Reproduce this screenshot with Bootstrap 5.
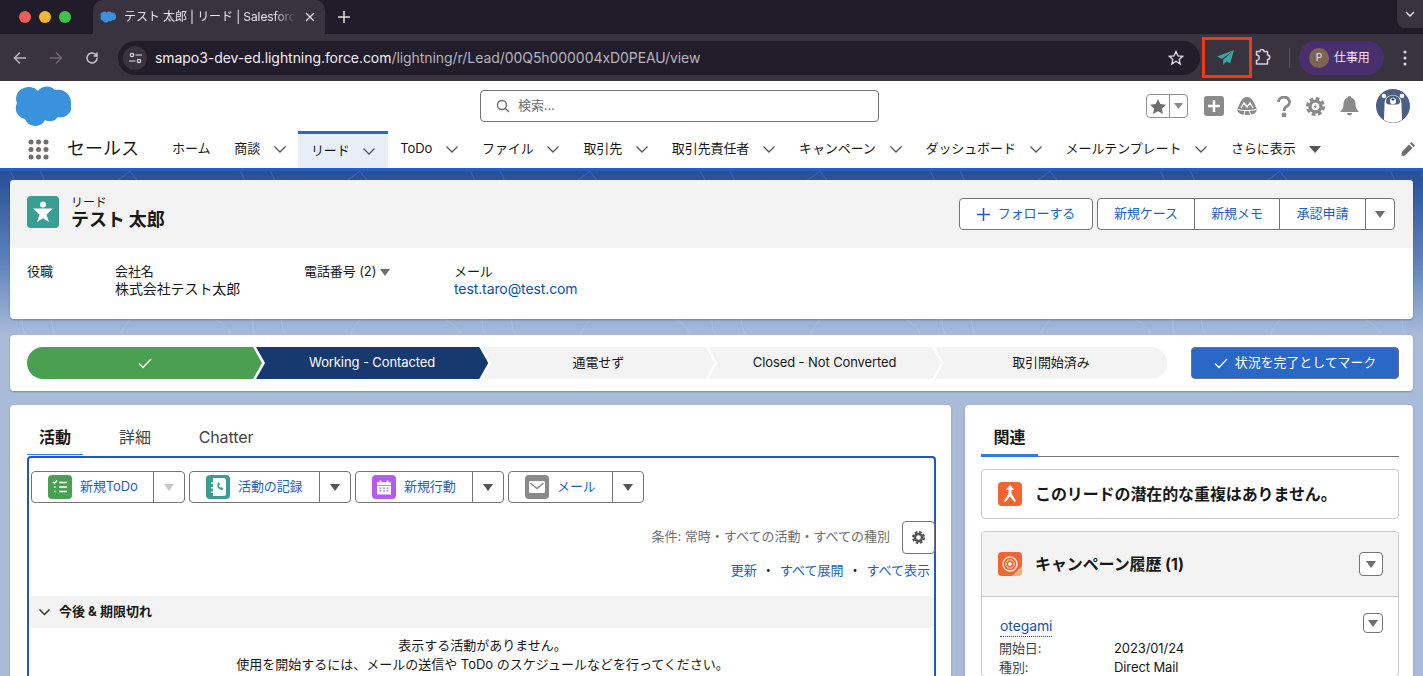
<!DOCTYPE html>
<html lang="ja">
<head>
<meta charset="utf-8">
<title>テスト 太郎 | リード | Salesforce</title>
<link href="https://cdn.jsdelivr.net/npm/bootstrap@5.3.0/dist/css/bootstrap.min.css" rel="stylesheet">
<style>
html,body{height:676px;overflow:hidden}
body{font-family:Inter,"Noto Sans CJK JP",sans-serif;font-size:13px;color:#181818;background:#a9bbd9;letter-spacing:-.1px}
a{text-decoration:none;color:#1b5fc1}
.tabstrip{height:34px;background:#201c2a;color:#e8e4ee}
.dot{width:12px;height:12px;border-radius:50%}
.lights{padding-left:19px;gap:8px;width:93px}
.tabitem{width:232px;height:34px;background:#39323f;border-radius:10px 10px 0 0;padding:0 10px 0 7px;font-size:12px;white-space:nowrap;overflow:hidden}
.tabitem .ttl{width:172px;overflow:hidden;margin-left:8px;-webkit-mask-image:linear-gradient(90deg,#000 150px,transparent 172px);mask-image:linear-gradient(90deg,#000 150px,transparent 172px)}
.strip-more{width:26px;height:28px;background:#39323f;border-radius:0 0 0 8px;margin-left:auto}
.toolbar{height:47px;background:#39323f;color:#ddd8e2;padding-left:2px}
.navbtn{width:36px}
.addr{width:1082px;height:34px;border-radius:17px;background:#221d2b;margin-left:8px;padding:0 16px 0 5px;color:#e8e4ee;font-size:14px;letter-spacing:-.06px}
.addr .host{color:#f2eff5}
.addr .rest{color:#b8b3be}
.siteic{width:24px;height:24px;border-radius:50%;background:#39323f;margin-right:8px}
.redbox{width:50px;height:41px;border:3px solid #f03a17;margin-left:2px;padding-right:4px}
.plug{margin-left:3px}
.tdiv{width:1px;height:20px;background:#5a5360;margin:0 9px 0 17px}
.profile{width:85px;height:34px;border-radius:17px;background:#4a2f6f;color:#efe9f7;font-size:12px;padding-left:10px;gap:5px}
.pav{width:20px;height:20px;border-radius:50%;background:#7d6553;color:#f0e8e0;font-size:10px}
.sfhead{height:50px;background:#fff;position:relative}
.logo{margin-left:14px;margin-top:5px}
.search{width:399px;height:32px;border:1px solid #747474;border-radius:4px;position:absolute;left:480px;top:9px;color:#706e6b;padding-left:15px;gap:8px;font-size:13px}
.hicons{position:absolute;right:13px;top:8px;gap:0}
.favgrp{width:42px;height:24px;border:1px solid #8f8f8f;border-radius:4px;margin-right:16px}
.favgrp span{height:100%}
.favl{width:23px;border-right:1px solid #8f8f8f}
.mr13{margin-right:13px}.mr20{margin-right:20px}.mr17{margin-right:17px}.mr15{margin-right:15px}
.sfnav{height:37px;background:#fff;align-items:flex-start}
.waffle{margin-left:28px;width:21px;margin-top:8px}
.appname{font-size:18px;margin-left:18px;width:93px;letter-spacing:0;line-height:36px}
.navi{height:36px;padding:0 12px;color:#181818;white-space:nowrap;gap:13.75px;font-size:13px}
.navi.on{background:#e8eef7;border-top:3px solid #2a68c8;padding:0 13px;height:37px}
.penc{margin-top:11px}
.bluebar{height:3px;background:#1f5fc6}
.stage{height:505px;overflow:hidden;padding:9px 10px 0;background-image:url("data:image/svg+xml,%3Csvg xmlns='http://www.w3.org/2000/svg' width='230' height='165' fill='none' stroke='%23ffffff' stroke-opacity='.12'%3E%3Cpath d='M10 0c20 30-8 60 12 90s-10 50 4 75M40 0c18 30-6 55 10 85s-8 55 6 80M130 0c-30 25-60 20-50 60s60 30 70 0-10-45-20-60zM190 30c-25 10-30 45-5 60s50-15 40-40-20-28-35-20zM120 165c10-30 50-40 80-25s30 20 30 25'/%3E%3C/svg%3E"),linear-gradient(#264f97 0,#5f82bc 90px,#a9bbd9 165px,#a9bbd9 100%);background-repeat:repeat-x,no-repeat;background-size:230px 165px,100% 100%}
.panel{background:#fff;border-radius:4px;box-shadow:0 1px 2px rgba(0,0,0,.25);border:0}
.hl{height:139px}
.hlhead{height:68px;background:#f3f3f3;border-radius:4px 4px 0 0;padding:16px 18px 0 17px}
.hlicon{width:32px;height:32px;border-radius:4px;background:#3a9d92;margin-right:12px}
.hl-type{font-size:12px;line-height:13px}
.hl-name{font-size:18px;font-weight:700;line-height:21px}
.sbtn{height:32px;background:#fff;border:1px solid #747474;border-radius:4px;color:#1b5fc1;font-size:13px}
.btnwrap{margin-top:2px}
.flw{width:134px;gap:8px}
.grp{margin-left:4px;background:#fff}
.grp span{height:100%;border-right:1px solid #747474}
.grp span:last-child{border-right:0}
.w97{width:97px}.w85{width:85px}.w86{width:86px}.w28{width:28px}
.flds{padding:14px 17px 0;line-height:18px}
.f1{width:88px}.f2{width:189px}.f3{width:150px}
.fv{font-size:14px;line-height:18px}
.fv a{color:#0b4fae}
.pathc{height:56px;margin-top:16px;padding:12px 14px 0 17px}
.seg{flex:1 1 0;height:32px;margin-left:-6px;background:#f3f3f3;clip-path:polygon(0 0,calc(100% - 9px) 0,100% 50%,calc(100% - 9px) 100%,0 100%,9px 50%);font-size:13px;color:#181818}
.seg.s1{flex:0 0 235px;margin-left:0;background:#4a9f50;border-radius:16px 0 0 16px;clip-path:polygon(0 0,calc(100% - 9px) 0,100% 50%,calc(100% - 9px) 100%,0 100%)}
.seg.s2{background:#16396f;color:#fff}
.seg.s5{border-radius:0 16px 16px 0;clip-path:polygon(0 0,100% 0,100% 100%,0 100%,9px 50%)}
.markbtn{width:208px;height:32px;margin-left:24px;background:#2a68c8;border:1px solid #747474;border-radius:4px;color:#fff;gap:7px}
.cols{margin-top:14px;gap:14px}
.leftc{width:941px;height:271px;padding:0 15px 0 17px;border-radius:4px 4px 0 0}
.rightc{width:448px;height:271px;padding:0 14px 0 16px;border-radius:4px 4px 0 0}
.tabrow{height:51px;font-size:16px;color:#444}
.tabrow .t{width:56px;text-align:center;line-height:22px;padding-top:21px;height:50px;box-sizing:border-box}
.tabrow .t.on{color:#181818;font-weight:700;border-bottom:1px solid #2a7ee6}
.tabsp{margin-left:24px}
.tabsp2{margin-left:35px}
.actbox{border:2px solid #1f57c3;border-bottom:0;border-radius:4px 4px 0 0;height:220px;padding:13px 0 0 2px;position:relative}
.splt{height:32px;background:#fff;border:1px solid #747474;border-radius:4px;color:#1b5fc1;margin-right:4px}
.splt .lb{height:100%;padding-left:16px;gap:8px;border-right:1px solid #747474}
.splt .ar{width:30px}
.w122{width:122px}.w130{width:130px}.w117{width:117px}.w104{width:104px}
.actic{width:24px;height:24px;border-radius:4px;position:relative;overflow:hidden}
.ic-g{background:#4a9f50}.ic-t{background:#3a9d92}.ic-p{background:#b45cf0}.ic-k{background:#8a8a8a}.ic-o{background:#f26430}
.filt{color:#706e6b;justify-content:flex-end;height:32px;margin-top:18px;gap:12px;letter-spacing:0}
.gearb{width:33px;height:33px;border:1px solid #747474;border-radius:4px;margin-right:-1px;background:#fff}
.lnks{justify-content:flex-end;height:22px;margin-top:7px;gap:5px;padding-right:4px;letter-spacing:0}
.secb{height:32px;background:#f3f3f3;margin:14px 0 0 -2px;padding-left:10px;font-weight:700;gap:9px;border-radius:3px;letter-spacing:0}
.empty{text-align:center;line-height:19px;margin-top:8px;letter-spacing:0}
.reltab{height:52px;border-bottom:1px solid #747474;font-size:16px;font-weight:700}
.reltab .t{width:57px;height:52px;text-align:center;padding-top:21px;line-height:22px;border-bottom:3px solid #2a7ee6;box-sizing:border-box}
.rcard{border:1px solid #c9c9c9;border-radius:4px;background:#fff}
.dupc{height:50px;margin-top:12px;padding-left:16px;font-weight:700;font-size:16px;gap:13px}
.campc{margin-top:12px;height:146px}
.camph{height:65px;background:#f3f3f3;border-bottom:1px solid #c9c9c9;border-radius:4px 4px 0 0;padding:0 15px 0 16px;font-weight:700;font-size:16px;gap:13px}
.ddb{width:24px;height:24px;border:1px solid #747474;border-radius:4px;background:#fff;margin-left:auto}
.ddb2{width:20px;height:20px;position:absolute;right:15px;top:16px}
.cbody{position:relative;padding:19px 0 0 17px}
.oteg{font-size:14px;color:#1b4fa8;border-bottom:1px dotted #1b4fa8;line-height:20px;display:inline-block;margin-left:1px}
.dl{line-height:19px}
.dl1{margin-top:2px}
.dl .k{width:115px;color:#444}
</style>
</head>
<body>
<div class="tabstrip d-flex align-items-center">
  <div class="lights d-flex"><span class="dot" style="background:#ed5f57"></span><span class="dot" style="background:#f4b72f"></span><span class="dot" style="background:#3fc24a"></span></div>
  <div class="tabitem d-flex align-items-center">
    <svg width="16" height="12" viewBox="0 0 57 40"><path fill="#3a92dc" d="M24 5a11 11 0 0 1 17-1 13 13 0 0 1 16 13 11 11 0 0 1-13 14 10 10 0 0 1-13 3 11 11 0 0 1-20-1A11 11 0 0 1 3 17 11 11 0 0 1 10 2a12 12 0 0 1 14 3z"/></svg>
    <div class="ttl">テスト 太郎 | リード | Salesforce</div>
    <svg class="ms-auto" width="10" height="10" viewBox="0 0 10 10" stroke="#ddd" stroke-width="1.4"><path d="M1 1l8 8M9 1l-8 8"/></svg>
  </div>
  <svg style="margin-left:13px" width="12" height="12" viewBox="0 0 12 12" stroke="#ddd" stroke-width="1.5"><path d="M6 0v12M0 6h12"/></svg>
  <div class="strip-more d-flex align-items-center justify-content-center align-self-start"><svg width="10" height="6" viewBox="0 0 10 6" fill="none" stroke="#ddd" stroke-width="1.5"><path d="M1 1l4 4 4-4"/></svg></div>
</div>
<div class="toolbar d-flex align-items-center">
  <div class="navbtn d-flex justify-content-center"><svg width="14" height="14" viewBox="0 0 14 14" fill="none" stroke="#bdb8c3" stroke-width="1.5"><path d="M13 7H1.500M7 1.500L1.500 7 7 12.500"/></svg></div>
  <div class="navbtn d-flex justify-content-center"><svg width="14" height="14" viewBox="0 0 14 14" fill="none" stroke="#6d6672" stroke-width="1.5"><path d="M1 7h11.500M7 1.500L12.500 7 7 12.500"/></svg></div>
  <div class="navbtn d-flex justify-content-center"><svg width="14" height="14" viewBox="0 0 14 14" fill="none" stroke="#c8c3cd" stroke-width="1.5"><path d="M12 7a5 5 0 1 1-1.600-3.700L12 5V1.500M12 5H8.600"/></svg></div>
  <div class="addr d-flex align-items-center">
    <div class="siteic d-flex align-items-center justify-content-center"><svg width="13" height="12" viewBox="0 0 13 12" fill="none" stroke="#ddd" stroke-width="1.2"><circle cx="3" cy="3" r="1.7"/><path d="M6.500 3H13M0 9h6.500"/><circle cx="10" cy="9" r="1.7"/></svg></div>
    <span><span class="host">smapo3-dev-ed.lightning.force.com</span><span class="rest">/lightning/r/Lead/00Q5h000004xD0PEAU/view</span></span>
    <svg class="ms-auto" width="16" height="16" viewBox="0 0 16 16" fill="none" stroke="#ddd" stroke-width="1.3"><path d="M8 1.500l2 4.300 4.700.5-3.500 3.200 1 4.600L8 11.200l-4.200 2.900 1-4.600L1.300 6.300l4.700-.5z"/></svg>
  </div>
  <div class="redbox d-flex align-items-center justify-content-center"><svg width="17" height="15" viewBox="0 0 18 16"><path fill="#37a9a0" d="M18 0L0 7l5 2.500L18 0zM18 0L6.500 10.500V16L10 12l4 2z"/></svg></div>
  <svg class="plug" width="17" height="17" viewBox="0 0 17 17" fill="none" stroke="#d8cfe6" stroke-width="1.500"><path d="M1.500 2.500H5a2 2 0 0 1 4 0h3.500V6a2 2 0 0 1 0 4.500V15h-11v-3.500a2.500 2.500 0 0 0 0-5.500z" stroke-linejoin="round"/></svg>
  <div class="tdiv"></div>
  <div class="profile d-flex align-items-center"><span class="pav d-flex align-items-center justify-content-center">P</span>仕事用</div>
  <svg class="ms-auto me-3" width="4" height="16" viewBox="0 0 4 16" fill="#ddd"><circle cx="2" cy="2" r="1.500"/><circle cx="2" cy="8" r="1.500"/><circle cx="2" cy="14" r="1.500"/></svg>
</div>
<div class="sfhead">
  <svg class="logo" width="57" height="40" viewBox="0 0 57 40"><path fill="#3a92dc" d="M24 5a11 11 0 0 1 17-1 13 13 0 0 1 16 13 11 11 0 0 1-13 14 10 10 0 0 1-13 3 11 11 0 0 1-20-1A11 11 0 0 1 3 17 11 11 0 0 1 10 2a12 12 0 0 1 14 3z"/></svg>
  <div class="search d-flex align-items-center"><svg width="14" height="14" viewBox="0 0 14 14" fill="none" stroke="#706e6b" stroke-width="1.400"><circle cx="6" cy="6" r="4.500"/><path d="M9.500 9.500L13 13"/></svg>検索...</div>
  <div class="hicons d-flex align-items-center">
    <div class="favgrp d-flex"><span class="favl d-flex align-items-center justify-content-center"><svg width="16" height="15" viewBox="0 0 18 17" fill="#706e6b"><path d="M9 0l2.700 5.700 6.300.8-4.600 4.300 1.200 6.200L9 14l-5.600 3 1.200-6.200L0 6.500l6.300-.8z"/></svg></span><span class="d-flex align-items-center justify-content-center flex-fill"><svg width="9" height="6" viewBox="0 0 9 6" fill="#8a8a8a"><path d="M0 0h9L4.500 6z"/></svg></span></div>
    <svg class="mr13" width="20" height="20" viewBox="0 0 20 20"><rect width="20" height="20" rx="3" fill="#8a8a8a"/><path d="M10 4v12M4 10h12" stroke="#fff" stroke-width="2.500"/></svg>
    <svg class="mr20" width="20" height="20" viewBox="0 0 20 20"><path fill="#8a8a8a" d="M10 1c3 0 5 2 6.500 5S19 11 19.500 13c.5 3-2 6-9.500 6S0 16 .5 13C1 11 2 9 3.500 6S7 1 10 1z"/><path d="M4 12l3-5 3 4 3-4 3 5" fill="none" stroke="#fff" stroke-width="1.400"/><path d="M1 13.500c5 1.500 13 1.500 18 0M8 15l-1 4M12 15l2 4" fill="none" stroke="#fff"/></svg>
    <svg class="mr15" width="14" height="21" viewBox="0 0 14 21" fill="none" stroke="#8a8a8a" stroke-width="2.800"><path d="M1.500 6a5.500 5 0 1 1 8 4.500C8 11.500 7 12 7 15"/><circle cx="7" cy="19" r="1" fill="#8a8a8a"/></svg>
    <svg class="mr15" width="19" height="19" viewBox="0 0 20 20"><circle cx="10" cy="10" r="7.500" fill="#8a8a8a"/><circle cx="10" cy="10" r="8.500" fill="none" stroke="#8a8a8a" stroke-width="3" stroke-dasharray="4 2.670"/><circle cx="10" cy="10" r="4" fill="#fff"/><path fill="#8a8a8a" d="M10.500 6.800L8 10.500h1.500l-.5 2.700 2.500-3.700H10z"/></svg>
    <svg class="mr17" width="19" height="20" viewBox="0 0 19 20" fill="#8a8a8a"><path d="M9.500 0a2 2 0 0 1 2 1.800C14.500 2.800 15.500 5.500 15.500 8c0 4 1 5.500 3 7v1H.5v-1c2-1.500 3-3 3-7 0-2.500 1-5.200 4-6.200A2 2 0 0 1 9.500 0zM7 17h5a2.500 2.500 0 0 1-5 0z"/></svg>
    <svg width="34" height="34" viewBox="0 0 34 34"><circle cx="17" cy="17" r="17" fill="#4b5f84"/><circle cx="8" cy="7" r="2.300" fill="#fff"/><circle cx="26" cy="7" r="2.300" fill="#fff"/><path fill="#fff" d="M17 6c5.500 0 8.500 3.500 8.500 9 0 5 .5 11 .5 16a17 17 0 0 1-18 0c0-5 .5-11 .5-16 0-5.500 3-9 8.500-9z"/><path fill="#4b5f84" d="M17 6.500c4 0 7 2.500 7 6s-3.500 3-7 3-7 .5-7-3 3-6 7-6z"/><ellipse cx="17" cy="12" rx="3" ry="3.300" fill="#fff"/><ellipse cx="17" cy="10.500" rx="1.500" ry="1" fill="#223"/></svg>
  </div>
</div>
<div class="sfnav d-flex">
  <svg class="waffle" width="21" height="21" viewBox="0 0 21 21" fill="#706e6b"><circle cx="3" cy="3" r="2.500"/><circle cx="10.500" cy="3" r="2.500"/><circle cx="18" cy="3" r="2.500"/><circle cx="3" cy="10.500" r="2.500"/><circle cx="10.500" cy="10.500" r="2.500"/><circle cx="18" cy="10.500" r="2.500"/><circle cx="3" cy="18" r="2.500"/><circle cx="10.500" cy="18" r="2.500"/><circle cx="18" cy="18" r="2.500"/></svg>
  <div class="appname">セールス</div>
  <div class="navi d-flex align-items-center">ホーム</div>
  <div class="navi d-flex align-items-center">商談<svg width="12" height="7" viewBox="0 0 12 7" fill="none" stroke="#555" stroke-width="1.300"><path d="M.5.5L6 6 11.500.5"/></svg></div>
  <div class="navi on d-flex align-items-center">リード<svg width="12" height="7" viewBox="0 0 12 7" fill="none" stroke="#555" stroke-width="1.300"><path d="M.5.5L6 6 11.500.5"/></svg></div>
  <div class="navi d-flex align-items-center">ToDo<svg width="12" height="7" viewBox="0 0 12 7" fill="none" stroke="#555" stroke-width="1.300"><path d="M.5.5L6 6 11.500.5"/></svg></div>
  <div class="navi d-flex align-items-center">ファイル<svg width="12" height="7" viewBox="0 0 12 7" fill="none" stroke="#555" stroke-width="1.300"><path d="M.5.5L6 6 11.500.5"/></svg></div>
  <div class="navi d-flex align-items-center">取引先<svg width="12" height="7" viewBox="0 0 12 7" fill="none" stroke="#555" stroke-width="1.300"><path d="M.5.5L6 6 11.500.5"/></svg></div>
  <div class="navi d-flex align-items-center">取引先責任者<svg width="12" height="7" viewBox="0 0 12 7" fill="none" stroke="#555" stroke-width="1.300"><path d="M.5.5L6 6 11.500.5"/></svg></div>
  <div class="navi d-flex align-items-center">キャンペーン<svg width="12" height="7" viewBox="0 0 12 7" fill="none" stroke="#555" stroke-width="1.300"><path d="M.5.5L6 6 11.500.5"/></svg></div>
  <div class="navi d-flex align-items-center">ダッシュボード<svg width="12" height="7" viewBox="0 0 12 7" fill="none" stroke="#555" stroke-width="1.300"><path d="M.5.5L6 6 11.500.5"/></svg></div>
  <div class="navi d-flex align-items-center">メールテンプレート<svg width="12" height="7" viewBox="0 0 12 7" fill="none" stroke="#555" stroke-width="1.300"><path d="M.5.5L6 6 11.500.5"/></svg></div>
  <div class="navi d-flex align-items-center">さらに表示<svg width="12" height="7" viewBox="0 0 12 7" fill="#555"><path d="M0 0h12L6 7z"/></svg></div>
  <svg class="penc ms-auto me-2" width="14" height="14" viewBox="0 0 14 14" fill="#706e6b"><path d="M10.500 0L14 3.500 12.500 5 9 1.500zM8 2.500L11.500 6 4 13.500.5 14l.5-4z"/></svg>
</div>
<div class="bluebar"></div>
<div class="stage">
  <div class="panel hl">
    <div class="hlhead d-flex">
      <div class="hlicon d-flex align-items-center justify-content-center"><svg width="22" height="22" viewBox="0 0 22 22" fill="#fff"><circle cx="11" cy="3.500" r="3"/><path d="M1 7.500h20l-6.500 6L17 21l-6-3.800L5 21l2.500-7.500z"/></svg></div>
      <div><div class="hl-type">リード</div><div class="hl-name">テスト 太郎</div></div>
      <div class="btnwrap ms-auto d-flex">
        <div class="sbtn flw d-flex align-items-center justify-content-center"><svg width="13" height="13" viewBox="0 0 13 13" stroke="#1b5fc1" stroke-width="1.500"><path d="M6.500 0v13M0 6.500h13"/></svg>フォローする</div>
        <div class="sbtn grp d-flex">
          <span class="w97 d-flex align-items-center justify-content-center">新規ケース</span>
          <span class="w85 d-flex align-items-center justify-content-center">新規メモ</span>
          <span class="w86 d-flex align-items-center justify-content-center">承認申請</span>
          <span class="w28 d-flex align-items-center justify-content-center"><svg width="10" height="7" viewBox="0 0 10 7" fill="#706e6b"><path d="M0 0h10L5 7z"/></svg></span>
        </div>
      </div>
    </div>
    <div class="flds d-flex">
      <div class="f1">役職</div>
      <div class="f2"><div>会社名</div><div class="fv">株式会社テスト太郎</div></div>
      <div class="f3">電話番号 (2) <svg width="10" height="7" viewBox="0 0 10 7" fill="#706e6b"><path d="M0 0h10L5 7z"/></svg></div>
      <div><div>メール</div><div class="fv"><a href="#">test.taro@test.com</a></div></div>
    </div>
  </div>
  <div class="panel pathc d-flex">
    <div class="d-flex flex-fill">
      <div class="seg s1 d-flex align-items-center justify-content-center"><svg width="14" height="11" viewBox="0 0 14 11" fill="none" stroke="#fff" stroke-width="1.300"><path d="M1 5.500l4 4 8-8.500"/></svg></div>
      <div class="seg s2 d-flex align-items-center justify-content-center">Working - Contacted</div>
      <div class="seg d-flex align-items-center justify-content-center">通電せず</div>
      <div class="seg d-flex align-items-center justify-content-center">Closed - Not Converted</div>
      <div class="seg s5 d-flex align-items-center justify-content-center">取引開始済み</div>
    </div>
    <div class="markbtn d-flex align-items-center justify-content-center"><svg width="14" height="11" viewBox="0 0 14 11" fill="none" stroke="#fff" stroke-width="1.300"><path d="M1 5.500l4 4 8-8.500"/></svg>状況を完了としてマーク</div>
  </div>
  <div class="cols d-flex">
    <div class="panel leftc">
      <div class="tabrow d-flex">
        <div class="t on">活動</div>
        <div class="t tabsp">詳細</div>
        <div class="t tabsp2">Chatter</div>
      </div>
      <div class="actbox">
        <div class="d-flex">
          <div class="splt d-flex"><div class="lb w122 d-flex align-items-center"><span class="actic ic-g d-flex align-items-center justify-content-center"><svg width="16" height="16" viewBox="0 0 16 16" fill="none" stroke="#fff" stroke-width="1.500"><path d="M1 3l1.500 1.500L5 1.500M7 3.500h8M7 8h8M7 12.500h8M2 8h1.500M2 12.500h1.500"/></svg></span>新規ToDo</div><div class="ar d-flex align-items-center justify-content-center"><svg width="10" height="7" viewBox="0 0 10 7" fill="#c9c9c9"><path d="M0 0h10L5 7z"/></svg></div></div>
          <div class="splt d-flex"><div class="lb w130 d-flex align-items-center"><span class="actic ic-t d-flex align-items-center justify-content-center"><svg width="16" height="18" viewBox="0 0 16 18" fill="#fff"><path d="M3 0h11a2 2 0 0 1 2 2v14a2 2 0 0 1-2 2H3v-3H1v-1.500h2v-3H1V9h2V6H1V4.500h2z"/><path fill="#3a9d92" d="M7 5l2-.7 1 2.500-1.200 1 1.500 2 1.200-.8 2 1.500-1 1.500c-3.500.5-6.500-4-4.500-7.500z"/></svg></span>活動の記録</div><div class="ar d-flex align-items-center justify-content-center"><svg width="10" height="7" viewBox="0 0 10 7" fill="#555"><path d="M0 0h10L5 7z"/></svg></div></div>
          <div class="splt d-flex"><div class="lb w117 d-flex align-items-center"><span class="actic ic-p d-flex align-items-center justify-content-center"><svg width="14" height="15" viewBox="0 0 16 16" fill="#fff"><path d="M3 0h2v2h6V0h2v2h3v3H0V2h3zM0 6h16v10H0zM3 8v1.500h2V8zm4 0v1.500h2V8zm4 0v1.500h2V8zM3 11v1.500h2V11zm4 0v1.500h2V11zm4 0v1.500h2V11z" fill-rule="evenodd"/></svg></span>新規行動</div><div class="ar d-flex align-items-center justify-content-center"><svg width="10" height="7" viewBox="0 0 10 7" fill="#555"><path d="M0 0h10L5 7z"/></svg></div></div>
          <div class="splt d-flex"><div class="lb w104 d-flex align-items-center"><span class="actic ic-k d-flex align-items-center justify-content-center"><svg width="16" height="12" viewBox="0 0 16 12"><rect width="16" height="12" rx="1.500" fill="#fff"/><path d="M1.500 2L8 7.500 14.500 2" fill="none" stroke="#8a8a8a" stroke-width="1.500"/></svg></span>メール</div><div class="ar d-flex align-items-center justify-content-center"><svg width="10" height="7" viewBox="0 0 10 7" fill="#555"><path d="M0 0h10L5 7z"/></svg></div></div>
        </div>
        <div class="filt d-flex align-items-center">条件: 常時・すべての活動・すべての種別
          <div class="gearb d-flex align-items-center justify-content-center"><svg width="13" height="13" viewBox="0 0 20 20"><circle cx="10" cy="10" r="7.500" fill="#555"/><circle cx="10" cy="10" r="8.500" fill="none" stroke="#555" stroke-width="3" stroke-dasharray="4 2.670"/><circle cx="10" cy="10" r="3.500" fill="#fff"/></svg></div>
        </div>
        <div class="lnks d-flex align-items-center"><a href="#">更新</a><span>・</span><a href="#">すべて展開</a><span>・</span><a href="#">すべて表示</a></div>
        <div class="secb d-flex align-items-center"><svg width="11" height="7" viewBox="0 0 11 7" fill="none" stroke="#333" stroke-width="1.500"><path d="M.5.5l5 5 5-5"/></svg>今後 &amp; 期限切れ</div>
        <div class="empty">表示する活動がありません。<br>使用を開始するには、メールの送信や ToDo のスケジュールなどを行ってください。</div>
      </div>
    </div>
    <div class="panel rightc">
      <div class="reltab"><div class="t">関連</div></div>
      <div class="rcard dupc d-flex align-items-center"><span class="actic ic-o d-flex align-items-center justify-content-center"><svg width="14" height="18" viewBox="0 0 14 18" fill="#fff"><path d="M7 0l4.500 5H8.500v3.500L13 16l-1.500 1L7 11.500 2.500 17 1 16l4.500-7.500V5h-3z"/></svg></span>このリードの潜在的な重複はありません。</div>
      <div class="rcard campc">
        <div class="camph d-flex align-items-center"><span class="actic ic-o d-flex align-items-center justify-content-center"><svg width="16" height="16" viewBox="0 0 16 16" fill="none" stroke="#fde4da"><circle cx="8" cy="8" r="7" stroke-width="1.500"/><circle cx="8" cy="8" r="4.200"/><circle cx="8" cy="8" r="1.600" fill="#fde4da"/></svg><svg class="position-absolute bottom-0 end-0" width="10" height="10" viewBox="0 0 10 10"><path d="M10 0v10H0z" fill="#fff" fill-opacity=".45"/></svg></span>キャンペーン履歴 (1)<div class="ddb d-flex align-items-center justify-content-center"><svg width="10" height="7" viewBox="0 0 10 7" fill="#706e6b"><path d="M0 0h10L5 7z"/></svg></div></div>
        <div class="cbody">
          <div class="ddb ddb2 d-flex align-items-center justify-content-center"><svg width="10" height="7" viewBox="0 0 10 7" fill="#706e6b"><path d="M0 0h10L5 7z"/></svg></div>
          <span class="oteg">otegami</span>
          <div class="dl dl1 d-flex"><div class="k">開始日:</div><div>2023/01/24</div></div>
          <div class="dl d-flex"><div class="k">種別:</div><div>Direct Mail</div></div>
        </div>
      </div>
    </div>
  </div>
</div>
<script src="https://cdn.jsdelivr.net/npm/bootstrap@5.3.0/dist/js/bootstrap.bundle.min.js"></script>
</body>
</html>
